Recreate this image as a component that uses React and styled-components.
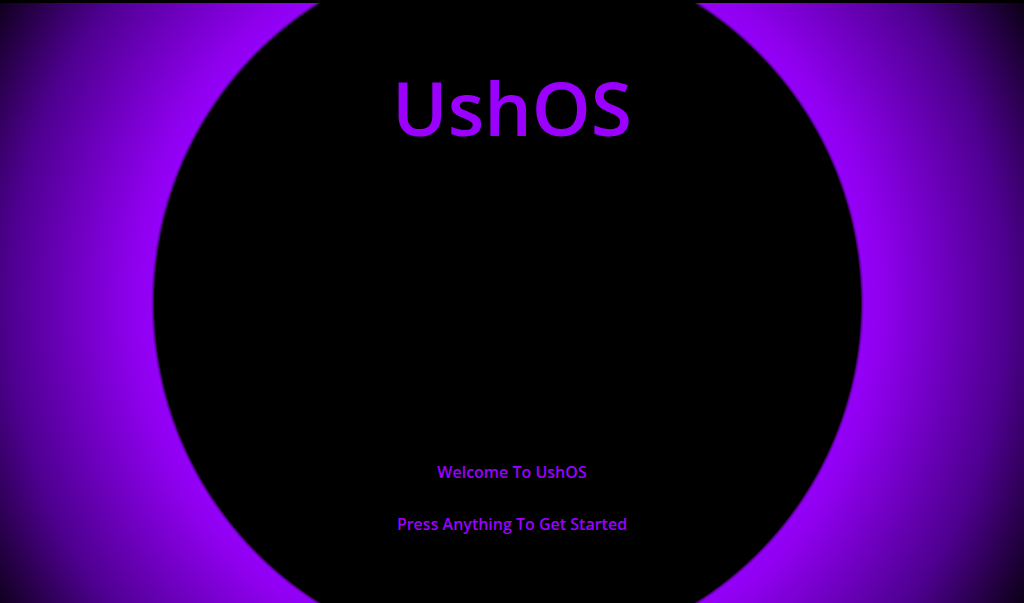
import React from "react";
import styled, { createGlobalStyle } from "styled-components";

const GlobalStyle = createGlobalStyle`
  html, body {
    margin: 0;
    padding: 0;
    background: #000;
    overflow: hidden;
  }
  * { box-sizing: border-box; }
`;

const Screen = styled.main`
  width: 100vw;
  height: 100vh;
  border-top: 3px solid #000;
  background:
    radial-gradient(
      circle at 507.5px 300px,
      #000 0,
      #000 353px,
      #5a0099 354.5px,
      #9400f8 356.5px,
      #9000f0 372px,
      #4e0090 500px,
      #000 615px
    );
  display: flex;
  flex-direction: column;
  align-items: center;
  padding-top: 67px;
  font-family: "Open Sans", "Noto Sans", sans-serif;
  color: #9b00ff;
`;

const Title = styled.h1`
  margin: 0;
  font-size: 75px;
  line-height: 75px;
  font-weight: 600;
  letter-spacing: 0;
`;

const Tagline = styled.p`
  margin: ${(p) => p.$top}px 0 0;
  font-size: 16px;
  line-height: 20px;
  font-weight: 600;
`;

export default function App() {
  return (
    <>
      <GlobalStyle />
      <Screen>
        <Title>UshOS</Title>
        <Tagline $top={317}>Welcome To UshOS</Tagline>
        <Tagline $top={32}>Press Anything To Get Started</Tagline>
      </Screen>
    </>
  );
}
